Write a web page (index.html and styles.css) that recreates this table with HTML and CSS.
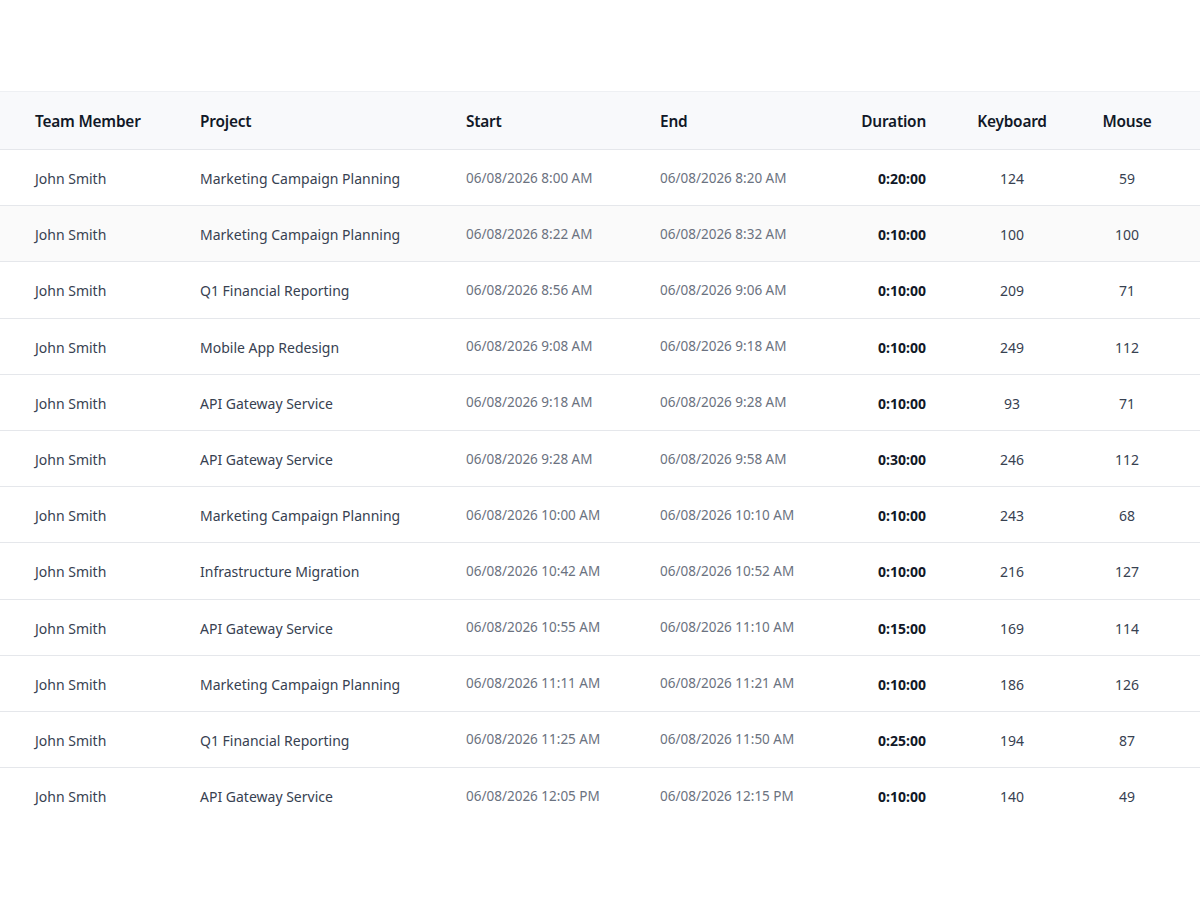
FILE: index.html
```html
<!DOCTYPE html>
<html>
<head>
<meta charset="utf-8">
<link rel="stylesheet" href="styles.css">
</head>
<body>
<div class="page">
<table class="log">
  <colgroup>
    <col class="c-member"><col class="c-project"><col class="c-start"><col class="c-end"><col class="c-dur"><col class="c-kb"><col class="c-mouse">
  </colgroup>
  <thead>
    <tr>
      <th class="member">Team Member</th>
      <th>Project</th>
      <th>Start</th>
      <th>End</th>
      <th class="dur">Duration</th>
      <th class="num">Keyboard</th>
      <th class="num mouse">Mouse</th>
    </tr>
  </thead>
  <tbody>
    <tr><td class="member">John Smith</td><td class="proj">Marketing Campaign Planning</td><td class="date">06/08/2026 8:00 AM</td><td class="date">06/08/2026 8:20 AM</td><td class="dur">0:20:00</td><td class="num">124</td><td class="num mouse">59</td></tr>
    <tr class="hl"><td class="member">John Smith</td><td class="proj">Marketing Campaign Planning</td><td class="date">06/08/2026 8:22 AM</td><td class="date">06/08/2026 8:32 AM</td><td class="dur">0:10:00</td><td class="num">100</td><td class="num mouse">100</td></tr>
    <tr><td class="member">John Smith</td><td class="proj">Q1 Financial Reporting</td><td class="date">06/08/2026 8:56 AM</td><td class="date">06/08/2026 9:06 AM</td><td class="dur">0:10:00</td><td class="num">209</td><td class="num mouse">71</td></tr>
    <tr><td class="member">John Smith</td><td class="proj">Mobile App Redesign</td><td class="date">06/08/2026 9:08 AM</td><td class="date">06/08/2026 9:18 AM</td><td class="dur">0:10:00</td><td class="num">249</td><td class="num mouse">112</td></tr>
    <tr><td class="member">John Smith</td><td class="proj">API Gateway Service</td><td class="date">06/08/2026 9:18 AM</td><td class="date">06/08/2026 9:28 AM</td><td class="dur">0:10:00</td><td class="num">93</td><td class="num mouse">71</td></tr>
    <tr><td class="member">John Smith</td><td class="proj">API Gateway Service</td><td class="date">06/08/2026 9:28 AM</td><td class="date">06/08/2026 9:58 AM</td><td class="dur">0:30:00</td><td class="num">246</td><td class="num mouse">112</td></tr>
    <tr><td class="member">John Smith</td><td class="proj">Marketing Campaign Planning</td><td class="date">06/08/2026 10:00 AM</td><td class="date">06/08/2026 10:10 AM</td><td class="dur">0:10:00</td><td class="num">243</td><td class="num mouse">68</td></tr>
    <tr><td class="member">John Smith</td><td class="proj">Infrastructure Migration</td><td class="date">06/08/2026 10:42 AM</td><td class="date">06/08/2026 10:52 AM</td><td class="dur">0:10:00</td><td class="num">216</td><td class="num mouse">127</td></tr>
    <tr><td class="member">John Smith</td><td class="proj">API Gateway Service</td><td class="date">06/08/2026 10:55 AM</td><td class="date">06/08/2026 11:10 AM</td><td class="dur">0:15:00</td><td class="num">169</td><td class="num mouse">114</td></tr>
    <tr><td class="member">John Smith</td><td class="proj">Marketing Campaign Planning</td><td class="date">06/08/2026 11:11 AM</td><td class="date">06/08/2026 11:21 AM</td><td class="dur">0:10:00</td><td class="num">186</td><td class="num mouse">126</td></tr>
    <tr><td class="member">John Smith</td><td class="proj">Q1 Financial Reporting</td><td class="date">06/08/2026 11:25 AM</td><td class="date">06/08/2026 11:50 AM</td><td class="dur">0:25:00</td><td class="num">194</td><td class="num mouse">87</td></tr>
    <tr class="last"><td class="member">John Smith</td><td class="proj">API Gateway Service</td><td class="date">06/08/2026 12:05 PM</td><td class="date">06/08/2026 12:15 PM</td><td class="dur">0:10:00</td><td class="num">140</td><td class="num mouse">49</td></tr>
  </tbody>
</table>
</div>
</body>
</html>
```
FILE: styles.css
```css
html, body {
  margin: 0;
  padding: 0;
  background: #ffffff;
}
body {
  font-family: "Noto Sans", "Open Sans", "Liberation Sans", sans-serif;
  color: #374151;
}
.page {
  padding-top: 91px;
}
.log {
  width: 1200px;
  border-collapse: collapse;
  table-layout: fixed;
}
.c-member { width: 188px; }
.c-project { width: 266px; }
.c-start { width: 194px; }
.c-end { width: 152px; }
.c-dur { width: 138px; }
.c-kb { width: 148px; }
.c-mouse { width: 114px; }

.log thead tr {
  background: #f8f9fb;
  border-top: 1px solid #eef0f3;
  border-bottom: 1px solid #e5e7eb;
}
.log th {
  height: 55px;
  padding: 2px 12px 0;
  text-align: left;
  font-size: 15.4px;
  font-weight: 600;
  color: #111827;
  letter-spacing: -0.2px;
  white-space: nowrap;
}
.log td {
  height: 53.2px;
  padding: 2px 12px 0;
  font-size: 14px;
  color: #374151;
  white-space: nowrap;
}
.log tbody tr {
  border-bottom: 1px solid #e5e7eb;
}
.log tbody tr.last {
  border-bottom: none;
}
.log tbody tr.hl {
  background: #fafafa;
}
.log .member {
  padding-left: 35px;
}
.log td.date {
  color: #6b7280;
  font-size: 13.5px;
  padding-top: 0;
}
.log .dur {
  text-align: right;
}
.log td.dur {
  font-weight: 700;
  color: #111827;
}
.log .num {
  text-align: center;
}
.log .mouse {
  padding-right: 44px;
}
```
